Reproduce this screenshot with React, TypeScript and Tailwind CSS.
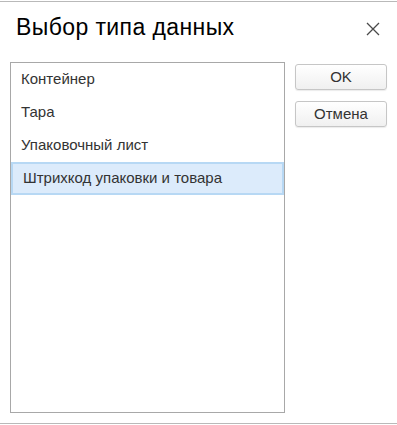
const items = ["Контейнер", "Тара", "Упаковочный лист", "Штрихкод упаковки и товара"];
const selected = 3;

export default function App() {
  return (
    <div className="w-[397px] h-[425px] bg-white pt-[1px] font-['Liberation_Sans',Arial,sans-serif]">
      <div className="h-[423px] border-y border-[#b9b9b9] flex flex-col">
        {/* header */}
        <div className="flex items-start justify-between pt-[12px] pl-[16px] pr-[17px]">
          <h1 className="text-[23px] leading-[27px] tracking-[0.4px] text-black">Выбор типа данных</h1>
          <button className="mt-[8px] text-[#4a4a4a]">
            <svg width="14" height="14" viewBox="0 0 14 14" fill="none" stroke="currentColor" strokeWidth="1.3">
              <path d="M1 1 L13 13 M13 1 L1 13" />
            </svg>
          </button>
        </div>

        {/* body */}
        <div className="flex gap-[10px] pl-[10px] mt-[21px]">
          <div className="w-[275px] h-[351px] border border-[#a8a8a8] bg-white">
            {items.map((item, i) => (
              <div
                key={item}
                className={`h-[33px] flex items-center pl-[10px] text-[15px] text-[#333333] ${
                  i === selected ? "bg-[#dcebfb] border-2 border-[#b7d8f4] pl-[8px]" : ""
                }`}
              >
                {item}
              </div>
            ))}
          </div>

          <div className="flex flex-col gap-[11px] pt-[2px]">
            {["OK", "Отмена"].map((label) => (
              <button
                key={label}
                className="w-[92px] h-[26px] rounded-[3px] border border-[#c6c6c6] bg-gradient-to-b from-white to-[#f0f0f0] text-[15px] text-[#333333] shadow-[0_1px_1px_rgba(0,0,0,0.08)]"
              >
                {label}
              </button>
            ))}
          </div>
        </div>
      </div>
    </div>
  );
}
